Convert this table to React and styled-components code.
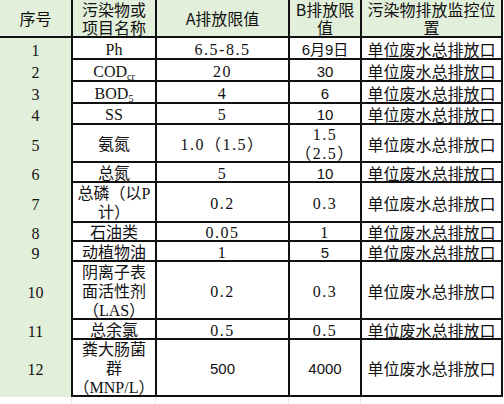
import React from "react";
import styled, { createGlobalStyle } from "styled-components";

const GlobalStyle = createGlobalStyle`
  html, body {
    margin: 0;
    padding: 0;
    background: #ffffff;
  }
  body {
    font-family: "Noto Sans CJK SC", sans-serif;
    color: #111;
  }
`;

const Sheet = styled.div`
  display: grid;
  grid-template-columns: 71px 84px 133px 72px 143px;
  width: 503px;
`;

const HeadCell = styled.div`
  box-sizing: border-box;
  height: 38px;
  background: #e2efda;
  display: flex;
  align-items: center;
  justify-content: center;
  text-align: center;
  font-family: "Noto Sans CJK SC", sans-serif;
  font-size: 16px;
  line-height: 18px;
  white-space: nowrap;
  border-bottom: 2px solid #111;
  border-left: ${(p) => (p.$first ? "none" : "2px solid #111")};
  border-right: ${(p) => (p.$last ? "2px solid #111" : "none")};
`;

const SeqCell = styled.div`
  box-sizing: border-box;
  background: #e2efda;
  display: flex;
  align-items: center;
  justify-content: center;
  font-family: "Liberation Serif", "Noto Sans CJK SC", serif;
  font-size: 16px;
  line-height: 19px;
  padding-top: 2px;
`;

const Cell = styled.div`
  box-sizing: border-box;
  background: #ffffff;
  display: flex;
  align-items: center;
  justify-content: center;
  text-align: center;
  font-family: ${(p) =>
    p.$sans
      ? '"Liberation Sans", "Noto Sans CJK SC", sans-serif'
      : p.$cjk
      ? '"Noto Sans CJK SC", sans-serif'
      : '"Liberation Serif", "Noto Sans CJK SC", serif'};
  font-size: ${(p) => (p.$sans ? "15px" : "16px")};
  letter-spacing: ${(p) => (p.$spaced ? "1.5px" : "0")};
  line-height: 19px;
  white-space: nowrap;
  overflow: hidden;
  padding-top: 2px;
  border-left: 2px solid #111;
  border-bottom: 2px solid #111;
  border-right: ${(p) => (p.$last ? "2px solid #111" : "none")};
`;

const Lines = styled.div`
  display: flex;
  flex-direction: column;
  align-items: center;
`;

const Line = styled.span`
  display: block;
  height: ${(p) => (p.$head ? "18px" : "19px")};
  line-height: ${(p) => (p.$head ? "18px" : "19px")};
`;

const Filler = styled.div`
  height: 7px;
  border-left: ${(p) => (p.$first ? "none" : "1px solid #e4e4e4")};
`;

const Sub = styled.sub`
  font-size: 10px;
  line-height: 0;
  vertical-align: -3px;
`;

const rows = [
  { n: "1", name: "Ph", a: "6.5-8.5", b: "6月9日", bSans: true, h: 22 },
  { n: "2", name: <>COD<Sub>cr</Sub></>, a: "20", b: "30", bSans: true, h: 22 },
  { n: "3", name: <>BOD<Sub>5</Sub></>, a: "4", b: "6", bSans: true, h: 22 },
  { n: "4", name: "SS", a: "5", b: "10", bSans: true, h: 21 },
  { n: "5", name: "氨氮", a: "1.0（1.5）", b: ["1.5", "（2.5）"], h: 38 },
  { n: "6", name: "总氮", a: "5", b: "10", bSans: true, h: 20 },
  { n: "7", name: ["总磷（以P", "计）"], a: "0.2", b: "0.3", h: 40 },
  { n: "8", name: "石油类", a: "0.05", b: "1", h: 19 },
  { n: "9", name: "动植物油", a: "1", b: "5", bSans: true, h: 20 },
  { n: "10", name: ["阴离子表", "面活性剂", "（LAS）"], a: "0.2", b: "0.3", h: 58 },
  { n: "11", name: "总余氯", a: "0.5", b: "0.5", h: 20 },
  { n: "12", name: ["粪大肠菌", "群", "（MNP/L）"], a: "500", aSans: true, b: "4000", bSans: true, h: 57 },
];

const lines = (v, head) =>
  Array.isArray(v) ? (
    <Lines>
      {v.map((t, i) => (
        <Line key={i} $head={head}>
          {t}
        </Line>
      ))}
    </Lines>
  ) : (
    <span>{v}</span>
  );

export default function App() {
  return (
    <>
      <GlobalStyle />
      <Sheet>
        <HeadCell $first>序号</HeadCell>
        <HeadCell>{lines(["污染物或", "项目名称"], true)}</HeadCell>
        <HeadCell>A排放限值</HeadCell>
        <HeadCell>{lines(["B排放限", "值"], true)}</HeadCell>
        <HeadCell $last>{lines(["污染物排放监控位", "置"], true)}</HeadCell>
        {rows.map((r) => (
          <React.Fragment key={r.n}>
            <SeqCell style={{ height: r.h }}>{r.n}</SeqCell>
            <Cell style={{ height: r.h }}>{lines(r.name)}</Cell>
            <Cell style={{ height: r.h }} $sans={r.aSans} $spaced={!r.aSans}>
              {lines(r.a)}
            </Cell>
            <Cell style={{ height: r.h }} $sans={r.bSans} $spaced={!r.bSans}>
              {lines(r.b)}
            </Cell>
            <Cell style={{ height: r.h }} $cjk $last>
              单位废水总排放口
            </Cell>
          </React.Fragment>
        ))}
        <Filler $first />
        <Filler />
        <Filler />
        <Filler />
        <Filler />
      </Sheet>
    </>
  );
}
